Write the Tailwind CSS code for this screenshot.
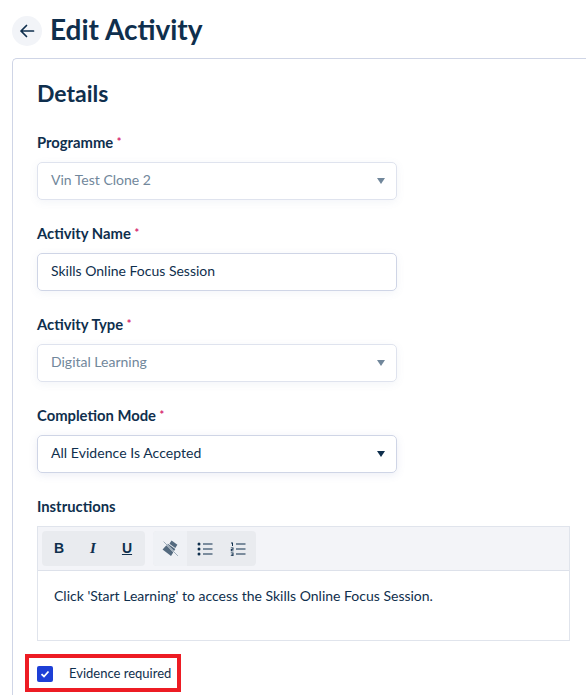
<!DOCTYPE html>
<html lang="en">
<head>
  <meta charset="UTF-8">
  <title>Edit Activity</title>
  <script src="https://cdn.jsdelivr.net/npm/@tailwindcss/browser@4"></script>
</head>
<body class="bg-white h-[695px] w-[586px] overflow-hidden font-['Lato',sans-serif] text-[#0f2f4d]">
  <!-- page header -->
  <div class="flex items-center gap-2 pl-3 h-[58px] pt-[3px]">
    <div class="w-[30px] h-[30px] rounded-full bg-[#f2f4f8] flex items-center justify-center">
      <svg width="16" height="16" viewBox="0 0 16 16" fill="none" stroke="#0f2f4d" stroke-width="1.7" stroke-linecap="round" stroke-linejoin="round"><path d="M14.5 8H2M7.5 2.5 2 8l5.500 5.500"/></svg>
    </div>
    <h1 class="text-[28px] font-bold leading-[32px] mb-[3px]">Edit Activity</h1>
  </div>

  <!-- card runs off the right of the window -->
  <div class="ml-3 w-[574px] h-[637px] border-l border-t border-[#cfd5e6] rounded-tl-[5px] pl-6 pt-[19px]">
    <h2 class="text-[23px] font-bold leading-[30px] mb-[25px]">Details</h2>

    <label class="block text-[14.8px] font-bold leading-[18px] mb-[11px]">Programme <span class="text-[#d6246e] text-[11px] align-top">*</span></label>
    <div class="w-[360px] h-[38px] border border-[#dfe3ee] rounded-[5px] flex items-center justify-between px-[13px] pb-[4px] text-[14px] text-[#71879b] shadow-[0_2px_8px_rgba(90,110,170,0.08)] mb-[24px]">
      <span>Vin Test Clone 2</span>
      <span class="w-0 h-0 border-x-[4px] border-x-transparent border-t-[6px] border-t-[#71879b] mr-[-2px] mt-[4px]"></span>
    </div>

    <label class="block text-[14.8px] font-bold leading-[18px] mb-[11px]">Activity Name <span class="text-[#d6246e] text-[11px] align-top">*</span></label>
    <div class="w-[360px] h-[38px] border border-[#cfd5e6] rounded-[5px] flex items-center px-[13px] pb-[4px] text-[14px] shadow-[0_2px_8px_rgba(90,110,170,0.08)] mb-[24px]">Skills Online Focus Session</div>

    <label class="block text-[14.8px] font-bold leading-[18px] mb-[11px]">Activity Type <span class="text-[#d6246e] text-[11px] align-top">*</span></label>
    <div class="w-[360px] h-[38px] border border-[#dfe3ee] rounded-[5px] flex items-center justify-between px-[13px] pb-[4px] text-[14px] text-[#71879b] shadow-[0_2px_8px_rgba(90,110,170,0.08)] mb-[24px]">
      <span>Digital Learning</span>
      <span class="w-0 h-0 border-x-[4px] border-x-transparent border-t-[6px] border-t-[#71879b] mr-[-2px] mt-[4px]"></span>
    </div>

    <label class="block text-[14.8px] font-bold leading-[18px] mb-[11px]">Completion Mode <span class="text-[#d6246e] text-[11px] align-top">*</span></label>
    <div class="w-[360px] h-[38px] border border-[#cfd5e6] rounded-[5px] flex items-center justify-between px-[13px] pb-[4px] text-[14px] tracking-[0.05px] shadow-[0_2px_8px_rgba(90,110,170,0.12)] mb-[24px]">
      <span>All Evidence Is Accepted</span>
      <span class="w-0 h-0 border-x-[4px] border-x-transparent border-t-[6px] border-t-[#0f2f4d] mr-[-2px] mt-[4px]"></span>
    </div>

    <label class="block text-[14.8px] font-bold leading-[18px] mb-[11px]">Instructions</label>
    <div class="w-[533px] h-[115px] border border-[#e0e4ec]">
      <div class="h-[44px] bg-[#f3f4f8] border-b border-[#dde1ea] flex items-center gap-2 pl-[4px]">
        <div class="flex h-[35px] w-[103px] rounded-[4px] bg-[#e9ebef] items-center text-[14px] font-bold">
          <span class="w-[34px] text-center font-['Liberation_Sans',sans-serif]">B</span>
          <span class="w-[34px] text-center italic font-['Liberation_Serif',serif] text-[15px]">I</span>
          <span class="w-[34px] text-center underline font-['Liberation_Sans',sans-serif]">U</span>
        </div>
        <div class="flex h-[35px] w-[103px] rounded-[4px] bg-[#e9ebef] items-center overflow-hidden">
          <span class="w-[34px] h-full bg-[#eff1f5] rounded-l-[4px] flex items-center justify-center">
            <svg width="17" height="17" viewBox="0 0 16 16"><path d="M9 .5 14.500 4.500 12.500 7.500 7 3.500Z" fill="#546a7f"/><path d="M5.500 3.500 12.500 8.500 8.500 15 .5 9Z" fill="#546a7f"/><path d="M1.500 1.500 15 15" stroke="#eff1f5" stroke-width="1.300"/><path d="M1.500 1.500 15 15" stroke="#8396a6" stroke-width="0.700"/></svg>
          </span>
          <span class="w-[34px] flex items-center justify-center pl-0.5">
            <svg width="16" height="14" viewBox="0 0 16 14" fill="#0f2f4d"><circle cx="2" cy="2" r="1.500"/><circle cx="2" cy="7" r="1.500"/><circle cx="2" cy="12" r="1.500"/><path d="M6 1.500h9.500v1H6zM6 6.500h9.500v1H6zM6 11.500h9.500v1H6z"/></svg>
          </span>
          <span class="w-[34px] flex items-center justify-center">
            <svg width="16" height="14" viewBox="0 0 16 14" fill="#0f2f4d"><path d="M6 1.500h9.500v1H6zM6 6.500h9.500v1H6zM6 11.500h9.500v1H6z"/><path d="M1 .5h2v3.500H2V1.500H1zM.8 5.500h2.700v2.200H1.800v.8h1.700v.8H.8V7h1.700v-.7H.8zM.8 10.500h2.700v3.500H.8v-.8h1.700v-.6H1.200v-.7h1.300v-.6H.8z"/></svg>
          </span>
        </div>
      </div>
      <p class="pl-4 pt-[16px] text-[14px] leading-[18px]">Click 'Start Learning' to access the Skills Online Focus Session.</p>
    </div>

    <!-- annotation box round the checkbox -->
    <div class="-ml-3 mt-[13px] w-[156px] h-[38px] border-[4px] border-[#ed1c24] flex items-center pl-2 pt-[2px]">
      <span class="w-4 h-4 rounded-[2px] bg-[#1d3fd6] flex items-center justify-center shrink-0">
        <svg width="10" height="10" viewBox="0 0 10 10" fill="none" stroke="#fff" stroke-width="1.800"><path d="M1.500 5.200 4 7.500 8.500 2.500"/></svg>
      </span>
      <span class="ml-4 text-[13px] whitespace-nowrap">Evidence required</span>
    </div>
  </div>
</body>
</html>
